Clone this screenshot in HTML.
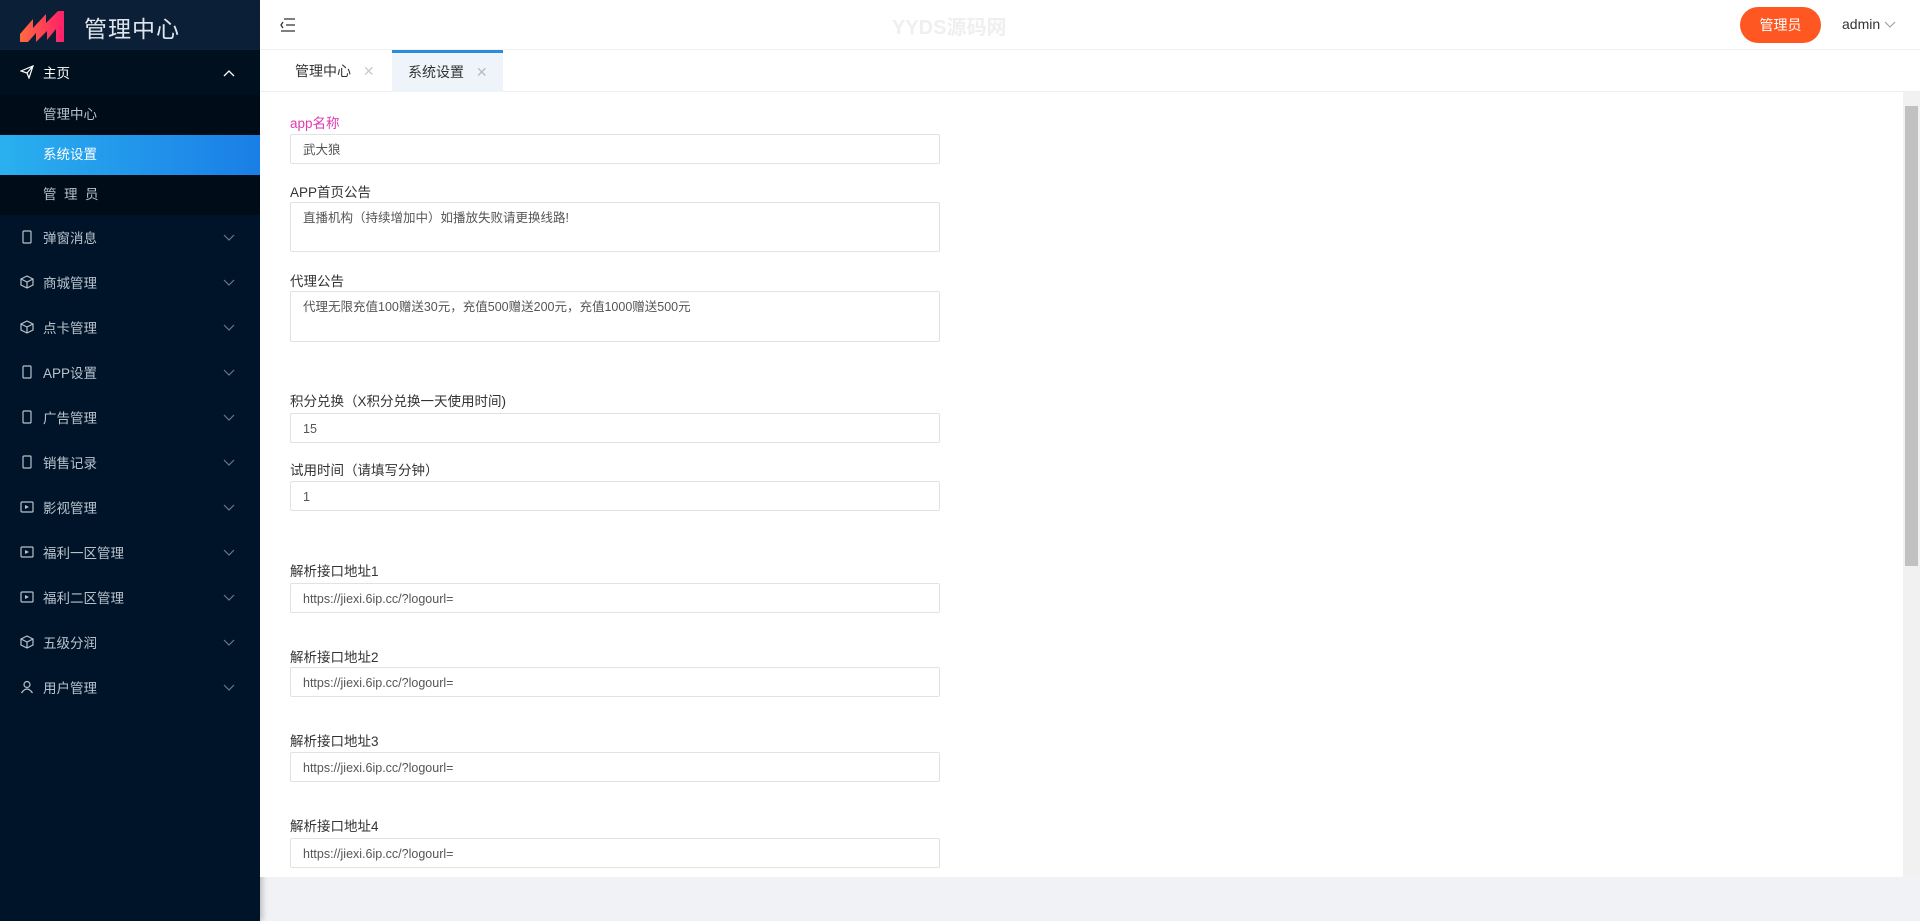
<!DOCTYPE html>
<html><head><meta charset="utf-8">
<style>
*{box-sizing:border-box;margin:0;padding:0}
body{width:1920px;height:921px;overflow:hidden;background:#f0f2f5;font-family:"Liberation Sans","Noto Sans CJK SC",sans-serif;font-size:14px;color:#333;position:relative}
.side{position:absolute;left:0;top:0;width:260px;height:921px;background:#001429;box-shadow:2px 0 6px rgba(0,0,0,.25)}
.logo{height:50px;background:#0b1f36;position:relative}
.logo .t{position:absolute;left:84px;top:10px;color:#dfe6ee;font-size:23px;letter-spacing:1px}
.mi{height:45px;position:relative;color:#b8c2cc;font-size:14px}
.mi .ic{position:absolute;left:20px;top:15px;width:14px;height:14px}
.mi .tx{position:absolute;left:43px;top:12px;font-size:13.5px}
.mi .ar{position:absolute;right:25px;top:14px}
.top{background:#00101f;color:#fff}
.sub{height:40px;background:#000c17;color:#b8c2cc;font-size:13.5px;padding-left:43px;line-height:40px}
.sub.act{background:linear-gradient(90deg,#2ab0ef,#1a7ee6);color:#fff}
.hdr{position:absolute;left:260px;top:0;right:0;height:50px;background:#fff;border-bottom:1px solid #f0f0f0}
.tabs{position:absolute;left:260px;top:50px;right:0;height:42px;background:#fff;border-bottom:1px solid #eee}
.tab{position:absolute;top:0;height:42px;line-height:42px;font-size:14px;color:#333}
.main{position:absolute;left:260px;top:92px;width:1660px;height:785px;background:#fff}
.sb{position:absolute;right:0;top:0;width:17px;height:785px;background:#f1f1f1}
.lab{position:absolute;left:30px;font-size:13.5px;color:#333}
.inp{position:absolute;left:30px;width:650px;height:30px;border:1px solid #e2e2e2;border-radius:2px;font-size:12.5px;color:#555;padding:8px 12px;line-height:14px}
</style></head><body>
<div class="side">
 <div class="logo">
  <svg style="position:absolute;left:20px;top:10px" width="44" height="32" viewBox="0 0 44 32"><defs><linearGradient id="g" x1="0" x2="1"><stop offset="0" stop-color="#ff6a3d"/><stop offset="1" stop-color="#ff1f6b"/></linearGradient></defs><path d="M0 24 L13 9 L13 18 L26 4 L26 13 L38 1 L44 1 L44 32 L36 32 L36 19 L27 30 L27 21 L16 32 L16 23 L8 32 L0 32Z" fill="url(#g)"/></svg>
  <div class="t">管理中心</div>
 </div>
 <div class="mi top"><svg class="ic" viewBox="0 0 14 14"><path d="M1 6 L13 1 L9 13 L7 8Z M7 8 L13 1" fill="none" stroke="#fff" stroke-width="1.2"/></svg><span class="tx">主页</span><span class="ar"><svg width="12" height="8"><path d="M1 7 L6 2 L11 7" fill="none" stroke="#fff" stroke-width="1.3"/></svg></span></div>
 <div class="sub">管理中心</div>
 <div class="sub act">系统设置</div>
 <div class="sub">管&nbsp;&nbsp;理&nbsp;&nbsp;员</div>
 <div id="menu"></div>
</div>
<div class="hdr">
 <svg style="position:absolute;left:20px;top:18px" width="16" height="14"><path d="M4 1H15 M6 7H15 M1 13H15 M3 4 L1 7 L3 10" fill="none" stroke="#333" stroke-width="1.3"/></svg>
 <div style="position:absolute;left:632px;top:11px;font-size:20px;font-weight:bold;color:#efefef">YYDS源码网</div>
 <div style="position:absolute;left:1480px;top:7px;width:81px;height:36px;border-radius:18px;background:#ff5722;color:#fff;font-size:14px;text-align:center;line-height:36px">管理员</div>
 <div style="position:absolute;left:1582px;top:16px;font-size:14px;color:#333">admin <svg width="12" height="8"><path d="M1 1 L6 6 L11 1" fill="none" stroke="#999" stroke-width="1"/></svg></div>
</div>
<div class="tabs">
 <div class="tab" style="left:17px;width:115px;padding-left:18px">管理中心 <span style="color:#ccc;margin-left:8px">✕</span></div>
 <div class="tab" style="left:132px;width:111px;background:#eef4fa;border-top:3px solid #2d8cd8;line-height:38px;padding-left:16px">系统设置 <span style="color:#bbb;margin-left:8px">✕</span></div>
</div>
<div class="main">
 <div class="lab" style="top:20px;color:#e03ab0">app名称</div>
 <div class="inp" style="top:42px">武大狼</div>
 <div class="lab" style="top:89px">APP首页公告</div>
 <div class="inp" style="top:110px;height:50px">直播机构（持续增加中）如播放失败请更换线路!</div>
 <div class="lab" style="top:178px">代理公告</div>
 <div class="inp" style="top:199px;height:51px">代理无限充值100赠送30元，充值500赠送200元，充值1000赠送500元</div>
 <div class="lab" style="top:298px">积分兑换（X积分兑换一天使用时间)</div>
 <div class="inp" style="top:321px">15</div>
 <div class="lab" style="top:367px">试用时间（请填写分钟）</div>
 <div class="inp" style="top:389px">1</div>
 <div class="lab" style="top:468px">解析接口地址1</div>
 <div class="inp" style="top:491px">https://jiexi.6ip.cc/?logourl=</div>
 <div class="lab" style="top:554px">解析接口地址2</div>
 <div class="inp" style="top:575px">https://jiexi.6ip.cc/?logourl=</div>
 <div class="lab" style="top:638px">解析接口地址3</div>
 <div class="inp" style="top:660px">https://jiexi.6ip.cc/?logourl=</div>
 <div class="lab" style="top:723px">解析接口地址4</div>
 <div class="inp" style="top:746px">https://jiexi.6ip.cc/?logourl=</div>
 <div class="sb"><div style="position:absolute;left:2px;top:14px;width:13px;height:460px;background:#c1c1c1"></div></div>
</div>
<script>
var items=[["弹窗消息","p"],["商城管理","c"],["点卡管理","c"],["APP设置","p"],["广告管理","p"],["销售记录","p"],["影视管理","v"],["福利一区管理","v"],["福利二区管理","v"],["五级分润","c"],["用户管理","u"]];
var ic={p:'<rect x="3" y="1" width="8" height="12" rx="1" fill="none" stroke="#b8c2cc" stroke-width="1.2"/>',
c:'<path d="M7 1 L13 4 L13 10 L7 13 L1 10 L1 4Z M1 4 L7 7 L13 4 M7 7 L7 13" fill="none" stroke="#b8c2cc" stroke-width="1.2"/>',
v:'<rect x="1" y="2" width="12" height="10" rx="1" fill="none" stroke="#b8c2cc" stroke-width="1.2"/><path d="M5 5 L9 7 L5 9Z" fill="#b8c2cc"/>',
u:'<circle cx="7" cy="4.5" r="3" fill="none" stroke="#b8c2cc" stroke-width="1.2"/><path d="M1.5 13 Q7 5 12.5 13" fill="none" stroke="#b8c2cc" stroke-width="1.2"/>'};
var h='';items.forEach(function(a){h+='<div class="mi"><svg class="ic" viewBox="0 0 14 14">'+ic[a[1]]+'</svg><span class="tx">'+a[0]+'</span><span class="ar"><svg width="12" height="8"><path d="M1 1 L6 6 L11 1" fill="none" stroke="#6b7785" stroke-width="1.2"/></svg></span></div>'});
document.getElementById('menu').innerHTML=h;
</script>
</body></html>
